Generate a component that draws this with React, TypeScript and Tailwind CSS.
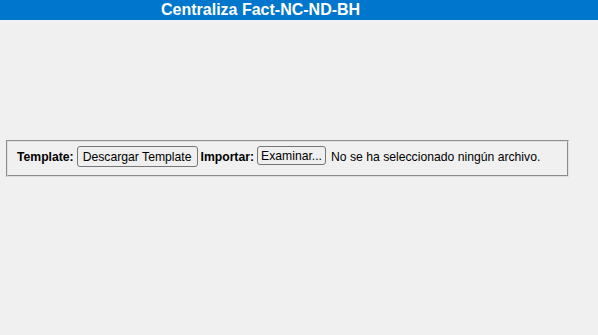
import React from "react";

export default function App() {
  return (
    <div className="w-[598px] h-[335px] bg-[#f0f0f0] overflow-hidden" style={{ fontFamily: '"Liberation Sans", Arial, sans-serif' }}>
      <div className="h-[20px] bg-[#0077cc] flex items-center pl-[161px]">
        <span className="text-white font-bold text-[16px] leading-none">Centraliza Fact-NC-ND-BH</span>
      </div>
      <div className="mt-[120px] ml-[6px] w-[563px] h-[37px] border-2 border-[#e0e0e0] [border-style:groove] pl-[9px] pt-[4px] flex items-start text-[12.2px] text-black">
        <span className="font-bold mt-[4px] leading-[14px]">Template:</span>
        <button className="ml-[3px] h-[21px] px-[5px] border border-[#767676] rounded-[3px] bg-[#efefef] text-[12.2px] leading-[14px] text-black">
          Descargar Template
        </button>
        <span className="ml-[3px] font-bold mt-[4px] leading-[14px]">Importar:</span>
        <button className="ml-[3px] h-[19px] px-[3px] border border-[#767676] rounded-[3px] bg-[#efefef] text-[12.2px] leading-[14px] text-black">
          Examinar...
        </button>
        <span className="ml-[5px] mt-[4px] leading-[14px]">No se ha seleccionado ningún archivo.</span>
      </div>
    </div>
  );
}
